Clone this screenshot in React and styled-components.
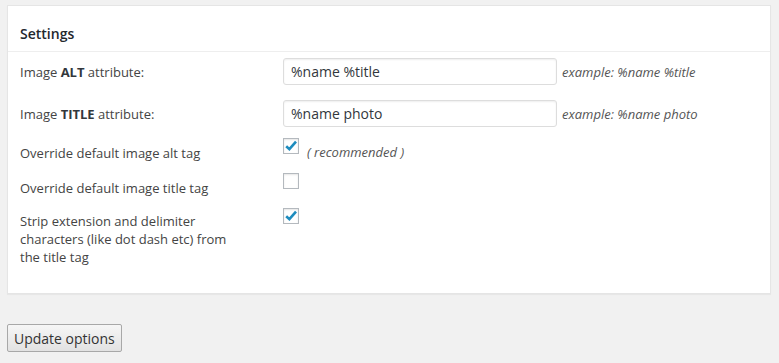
import styled, { createGlobalStyle } from 'styled-components';

const Global = createGlobalStyle`
    html, body {
        margin: 0;
        padding: 0;
        background: #f1f1f1;
    }
    body {
        font-family: "Open Sans", "Liberation Sans", sans-serif;
        font-size: 13px;
        color: #444;
    }
`

const Page = styled.div`
    padding: 5px 8px 0 7px;
`

const Panel = styled.div`
    width: 762px;
    background: #fff;
    border: 1px solid #e5e5e5;
    box-shadow: 0 1px 1px rgba(0, 0, 0, 0.04);
`

const Header = styled.h3`
    margin: 0;
    padding: 18px 12px 7px;
    font-size: 14px;
    line-height: 20px;
    font-weight: 600;
    color: #23282d;
    border-bottom: 1px solid #eee;
`

const Body = styled.div`
    display: flex;
    flex-direction: column;
    padding: 6px 12px 27px;
`

const Row = styled.div`
    display: grid;
    grid-template-columns: 263px 1fr;
    align-items: ${p => (p.$center ? 'center' : 'start')};
    margin-top: ${p => p.$gap || 0}px;
`

const Label = styled.div`
    font-size: 13px;
    line-height: 18px;
    color: #444;
    padding-top: ${p => p.$top || 0}px;
    max-width: 220px;
    b {
        font-weight: 700;
        color: #32373c;
    }
`

const Field = styled.div`
    display: flex;
    align-items: ${p => (p.$center ? 'center' : 'flex-start')};
    gap: 5px;
`

const TextInput = styled.input`
    box-sizing: border-box;
    width: 274px;
    height: 27px;
    padding: 0 7px;
    border: 1px solid #ddd;
    border-radius: 3px;
    box-shadow: inset 0 1px 2px rgba(0, 0, 0, 0.07);
    font-family: inherit;
    font-size: 14px;
    color: #32373c;
    outline: none;
`

const Hint = styled.span`
    font-style: italic;
    font-size: 13px;
    color: #555;
`

const Box = styled.span`
    box-sizing: border-box;
    display: inline-flex;
    align-items: center;
    justify-content: center;
    width: 16px;
    height: 16px;
    border: 1px solid #b4b9be;
    background: #fff;
    box-shadow: inset 0 1px 2px rgba(0, 0, 0, 0.1);
`

const Note = styled.span`
    font-style: italic;
    font-size: 13px;
    color: #555;
    margin: 5px 0 0 3px;
`

const Button = styled.button`
    margin-top: 30px;
    height: 28px;
    padding: 0 6px;
    font-family: "Open Sans", "Liberation Sans", sans-serif;
    font-size: 14px;
    color: #333;
    background: linear-gradient(#f6f6f6, #e2e2e2);
    border: 1px solid #a8a8a8;
    border-radius: 2px;
`

function Check({ on }) {
    return (
        <Box>
            {on && (
                <svg width="14" height="14" viewBox="0 0 14 14">
                    <path d="M2.2 7.2 L5.4 10.2 L12 2.6" fill="none" stroke="#1e8cbe" strokeWidth="2.6" />
                </svg>
            )}
        </Box>
    )
}

export default function App() {
    return (
        <Page>
            <Global />
            <Panel>
                <Header>Settings</Header>
                <Body>
                    <Row $center>
                        <Label>Image <b>ALT</b> attribute:</Label>
                        <Field $center>
                            <TextInput defaultValue="%name %title" />
                            <Hint>example: %name %title</Hint>
                        </Field>
                    </Row>
                    <Row $center $gap={15}>
                        <Label>Image <b>TITLE</b> attribute:</Label>
                        <Field $center>
                            <TextInput defaultValue="%name photo" />
                            <Hint>example: %name photo</Hint>
                        </Field>
                    </Row>
                    <Row $gap={11}>
                        <Label $top={6}>Override default image alt tag</Label>
                        <Field>
                            <Check on />
                            <Note>( recommended )</Note>
                        </Field>
                    </Row>
                    <Row $gap={11}>
                        <Label $top={6}>Override default image title tag</Label>
                        <Field>
                            <Check />
                        </Field>
                    </Row>
                    <Row $gap={11}>
                        <Label $top={4}>Strip extension and delimiter characters (like dot dash etc) from the title tag</Label>
                        <Field>
                            <Check on />
                        </Field>
                    </Row>
                </Body>
            </Panel>
            <Button>Update options</Button>
        </Page>
    )
}
